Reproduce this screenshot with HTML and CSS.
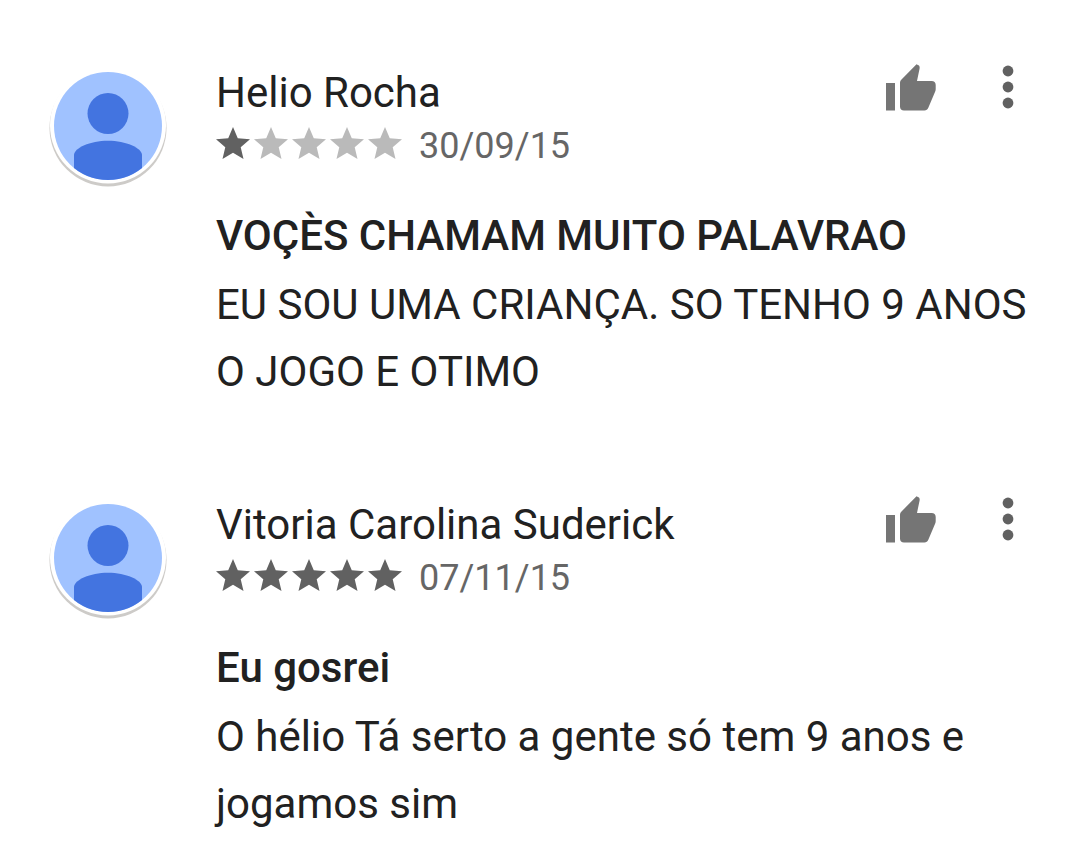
FILE: index.html
```html
<!DOCTYPE html>
<html lang="pt-BR">
<head>
  <meta charset="UTF-8" />
  <meta name="viewport" content="width=device-width, initial-scale=1.0"/>
  <title>Avaliações</title>
  <link rel="stylesheet" href="styles.css">
</head>
<body>

<svg class="symbols" aria-hidden="true">
  <symbol id="avatar" viewBox="0 0 120 120">
    <clipPath id="face"><circle cx="60" cy="58" r="54"/></clipPath>
    <circle cx="60" cy="60" r="58.500" fill="#cdcbc8"/>
    <circle cx="60" cy="57.500" r="58" fill="#fff"/>
    <g clip-path="url(#face)">
      <rect width="120" height="120" fill="#a0c2ff"/>
      <circle cx="60" cy="45.500" r="20.500" fill="#4374e0"/>
      <path d="M26 120V87c0-7 16-14.300 34-14.300S94 80 94 87v33z" fill="#4374e0"/>
    </g>
  </symbol>
  <symbol id="star" viewBox="2 2 20 19" preserveAspectRatio="none">
    <path d="M12 17.270L18.180 21l-1.640-7.030L22 9.240l-7.190-.61L12 2 9.190 8.630 2 9.240l5.460 4.730L5.820 21z"/>
  </symbol>
  <symbol id="thumb" viewBox="1 1 52 48">
    <path d="M1 19h9v27.500H1zM34 1.500l-2.500-1.200L16.500 15.500c-1 1-1.500 2-1.500 3.300v23.700c0 2.500 1.500 4 4 4h20.500c1.800 0 3-.8 3.700-2.400l7-16.600c.4-.9.500-1.700.5-2.600v-4c0-2.500-1.600-4-4-4H32l2.600-12.500c.2-1.200 0-2-.6-2.900z"/>
  </symbol>
  <symbol id="dots" viewBox="0 0 12 44">
    <circle cx="6" cy="6" r="5.400"/><circle cx="6" cy="22" r="5.400"/><circle cx="6" cy="38" r="5.400"/>
  </symbol>
</svg>

<main class="reviews">
  <article class="review">
    <svg class="avatar"><use href="#avatar"/></svg>
    <div class="content">
      <header class="top">
        <div class="info">
          <h2 class="name">Helio Rocha</h2>
          <div class="rating">
            <div class="stars" role="img" aria-label="1 de 5 estrelas">
              <svg class="star on"><use href="#star"/></svg>
              <svg class="star"><use href="#star"/></svg>
              <svg class="star"><use href="#star"/></svg>
              <svg class="star"><use href="#star"/></svg>
              <svg class="star"><use href="#star"/></svg>
            </div>
            <time class="date" datetime="2015-09-30">30/09/15</time>
          </div>
        </div>
        <div class="actions">
          <button class="like" aria-label="Útil"><svg><use href="#thumb"/></svg></button>
          <button class="more" aria-label="Mais opções"><svg><use href="#dots"/></svg></button>
        </div>
      </header>
      <h3 class="title">VOÇÈS CHAMAM MUITO PALAVRAO</h3>
      <p class="text">EU SOU UMA CRIANÇA. SO TENHO 9 ANOS O JOGO E OTIMO</p>
    </div>
  </article>

  <article class="review">
    <svg class="avatar"><use href="#avatar"/></svg>
    <div class="content">
      <header class="top">
        <div class="info">
          <h2 class="name">Vitoria Carolina Suderick</h2>
          <div class="rating">
            <div class="stars" role="img" aria-label="5 de 5 estrelas">
              <svg class="star on"><use href="#star"/></svg>
              <svg class="star on"><use href="#star"/></svg>
              <svg class="star on"><use href="#star"/></svg>
              <svg class="star on"><use href="#star"/></svg>
              <svg class="star on"><use href="#star"/></svg>
            </div>
            <time class="date" datetime="2015-11-07">07/11/15</time>
          </div>
        </div>
        <div class="actions">
          <button class="like" aria-label="Útil"><svg><use href="#thumb"/></svg></button>
          <button class="more" aria-label="Mais opções"><svg><use href="#dots"/></svg></button>
        </div>
      </header>
      <h3 class="title">Eu gosrei</h3>
      <p class="text">O hélio Tá serto a gente só tem 9 anos e jogamos sim</p>
    </div>
  </article>
</main>

</body>
</html>
```

FILE: styles.css
```css
* {
  box-sizing: border-box;
}

body {
  margin: 0;
  background: #fff;
  color: #212121;
  font-family: Roboto, sans-serif;
}

h2, h3, p {
  margin: 0;
}

svg {
  display: block;
}

.symbols {
  position: absolute;
  width: 0;
  height: 0;
}

.reviews {
  display: flex;
  flex-direction: column;
  gap: 92px;
  padding: 65px 48px 0;
}

.review {
  display: flex;
  align-items: flex-start;
  gap: 48px;
}

.avatar {
  flex: none;
  width: 120px;
  height: 120px;
  margin-top: 3px;
}

.content {
  flex: 1;
}

.top {
  display: flex;
  justify-content: space-between;
}

.name {
  font-size: 42px;
  font-weight: 400;
  line-height: 56px;
}

.rating {
  display: flex;
  align-items: flex-start;
  gap: 17px;
  padding-top: 6px;
}

.stars {
  display: flex;
  gap: 4px;
}

.star {
  width: 34px;
  height: 32px;
  fill: #bababa;
}

.star.on {
  fill: #616161;
}

.date {
  color: #666;
  font-size: 36px;
  line-height: 38px;
}

.actions {
  display: flex;
  align-items: flex-start;
  gap: 64px;
  padding-right: 18px;
}

button {
  padding: 0;
  border: none;
  background: none;
  cursor: pointer;
}

.like svg {
  width: 52px;
  height: 48px;
  fill: #757575;
  overflow: visible;
}

#thumb {
  overflow: visible;
}

.more svg {
  width: 12px;
  height: 44px;
  fill: #616161;
}

.title {
  margin-top: 36px;
  font-size: 42px;
  font-weight: 500;
  line-height: 70px;
}

.text {
  font-size: 42px;
  line-height: 67px;
}
```
